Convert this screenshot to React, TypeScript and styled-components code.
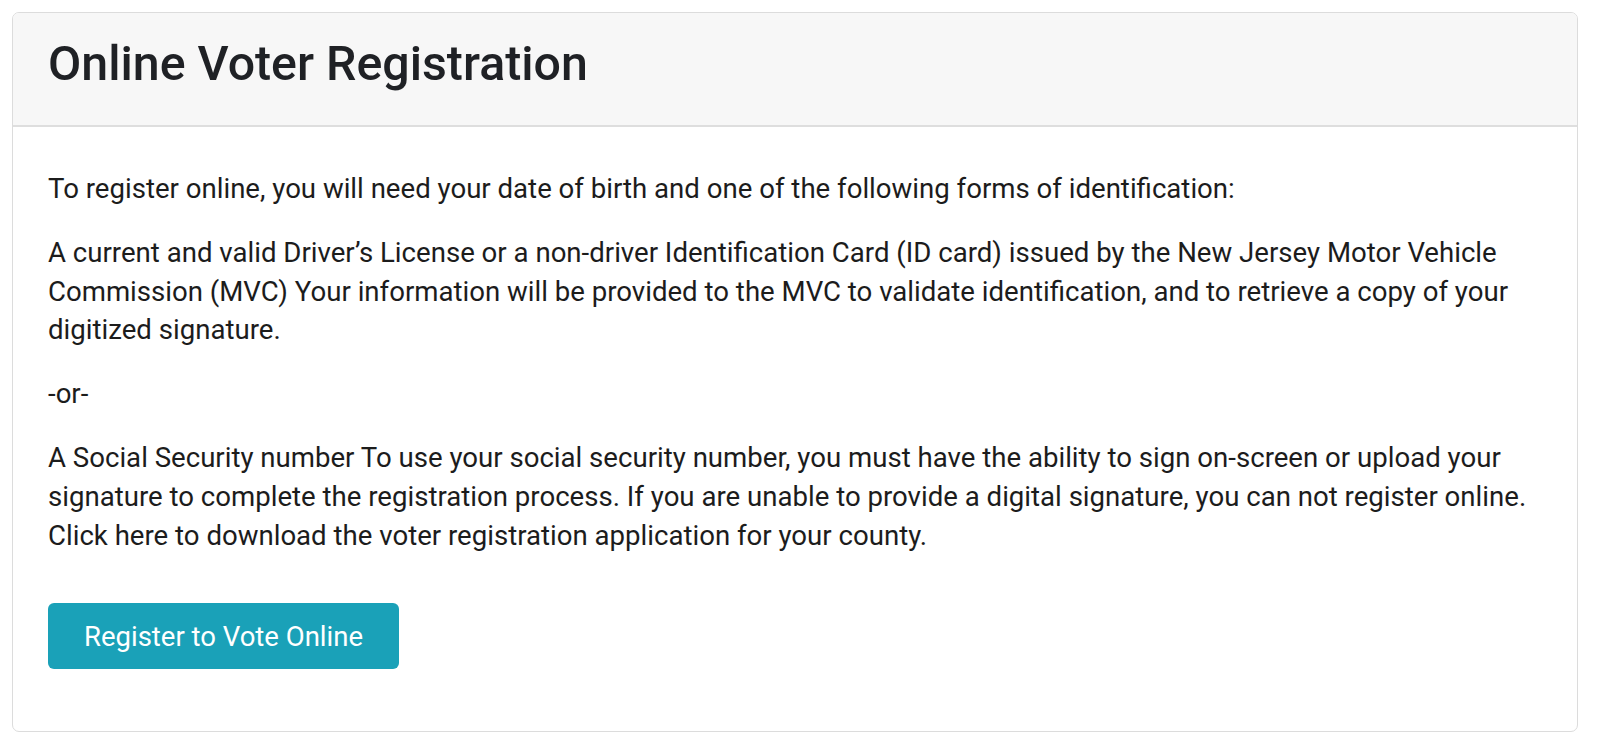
import styled, { createGlobalStyle } from "styled-components"

const Global = createGlobalStyle`
    body {
        margin: 0;
        background: #ffffff;
        font-family: Roboto, "Liberation Sans", sans-serif;
        color: #212529;
    }
`

const Page = styled.div`
    padding: 12px 22px 9px 12px;
`

const Card = styled.section`
    border: 1px solid #dcdcdc;
    border-radius: 7px;
    overflow: hidden;
    background: #fff;
`

const Header = styled.header`
    background: #f7f7f7;
    border-bottom: 2px solid #dedede;
    padding: 0 35px 11px;
    height: 101px;
    display: flex;
    align-items: center;
`

const Title = styled.h2`
    margin: 0;
    font-size: 48.3px;
    font-weight: 500;
    color: #1f2125;
`

const Body = styled.div`
    padding: 43px 35px 62px;
`

const Para = styled.p`
    margin: 0 0 25px;
    font-size: 27.6px;
    line-height: 38.8px;
    color: #1c1c1c;

    &:last-of-type {
        margin-bottom: 0;
    }
`

const Button = styled.button`
    display: block;
    margin-top: 48px;
    background: #1aa1b8;
    color: #fff;
    border: none;
    border-radius: 6px;
    width: 351px;
    height: 66px;
    font-family: inherit;
    font-size: 27.5px;
    cursor: pointer;
`

export default () => {
    return (
        <Page>
            <Global />
            <Card>
                <Header>
                    <Title>Online Voter Registration</Title>
                </Header>
                <Body>
                    <Para>To register online, you will need your date of birth and one of the following forms of identification:</Para>
                    <Para>A current and valid Driver’s License or a non-driver Identification Card (ID card) issued by the New Jersey Motor Vehicle Commission (MVC) Your information will be provided to the MVC to validate identification, and to retrieve a copy of your digitized signature.</Para>
                    <Para>-or-</Para>
                    <Para>A Social Security number To use your social security number, you must have the ability to sign on-screen or upload your signature to complete the registration process. If you are unable to provide a digital signature, you can not register online. Click here to download the voter registration application for your county.</Para>
                    <Button>Register to Vote Online</Button>
                </Body>
            </Card>
        </Page>
    )
}
